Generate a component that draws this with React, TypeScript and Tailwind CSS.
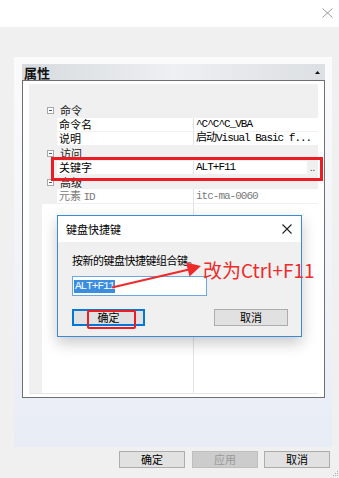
import React from 'react';

const ui = "font-['Noto_Sans_CJK_SC',sans-serif]";
const mono = "font-['Liberation_Mono','Noto_Sans_CJK_SC',monospace] tracking-[-1px]";

const Category: React.FC<{ label: string }> = ({ label }) => (
  <div className="h-[14.33px] flex items-center">
    <div className="ml-[18px] w-[7px] h-[7px] border border-[#a8a8a8] bg-white flex items-center justify-center">
      <div className="w-[3px] h-px bg-[#4b5b78]" />
    </div>
    <span className="ml-[6px] text-[11px] leading-none text-[#222]">{label}</span>
  </div>
);

interface PropRowProps {
  name: React.ReactNode;
  value: string;
  muted?: boolean;
  more?: boolean;
}

const PropRow: React.FC<PropRowProps> = ({ name, value, muted, more }) => (
  <div className="h-[14.33px] flex pl-[28px]">
    <div className={`flex-1 flex bg-white mb-px ${muted ? 'text-[#7a7a7a]' : 'text-black'}`}>
      <div className="w-[137px] border-r border-[#e3e3e3] pl-[2px] flex items-center text-[11px] leading-none">{name}</div>
      <div className={`flex-1 pl-[2px] flex items-center text-[11px] leading-none ${mono}`}>{value}</div>
      {more && (
        <div className="w-[11px] bg-[#f0f0f0] flex items-end justify-center pb-[2px] text-[9px] leading-none text-[#555]">..</div>
      )}
    </div>
  </div>
);

const Btn: React.FC<{ label: string; disabled?: boolean; className?: string }> = ({ label, disabled, className = '' }) => (
  <div
    className={`h-[17px] flex items-center justify-center text-[11px] leading-none border ${
      disabled ? 'bg-[#cccccc] border-[#bfbfbf] text-[#9a9a9a]' : 'bg-[#e1e1e1] border-[#adadad] text-black'
    } ${className}`}
  >
    {label}
  </div>
);

export default function App() {
  return (
    <div className={`relative w-[339px] h-[478px] bg-[#f0f0f0] overflow-hidden ${ui}`}>
      {/* top bar */}
      <div className="h-[27px] bg-white flex justify-end items-start pr-[6px] pt-[8px]">
        <svg width="11" height="10" viewBox="0 0 11 10">
          <path d="M0.5 0.5 L10.5 9.5 M10.5 0.5 L0.5 9.5" stroke="#9a9a9a" strokeWidth="1" fill="none" />
        </svg>
      </div>

      {/* outer panel */}
      <div className="mt-[30px] ml-[14px] mr-[7px] h-[390px] bg-gradient-to-b from-[#fbfbfc] to-[#e8ecf5] pt-[7px] pl-[8px] pr-[7px]">
        <div className="h-[16px] flex items-center justify-between pl-[2px] pr-[5px] bg-gradient-to-r from-[#d6dade] via-[#eef0f2] to-[#dcdfe3]">
          <span className="text-[13px] font-bold leading-none text-[#111]">属性</span>
          <svg width="5" height="3" viewBox="0 0 5 3">
            <path d="M2.5 0 L5 3 L0 3 Z" fill="#111" />
          </svg>
        </div>
        <div className="h-[318px] border border-[#6f6f6f] bg-white pt-[3px] px-[6px]">
          <div className="h-[310px] flex flex-col bg-[#f0f0f0] border-b border-[#e6e6e6]">
            <div className="h-[19.5px] shrink-0" />
            <Category label="命令" />
            <PropRow name="命令名" value="^C^C^C_VBA" />
            <PropRow name="说明" value="启动Visual Basic f..." />
            <Category label="访问" />
            <PropRow name="关键字" value="ALT+F11" more />
            <Category label="高级" />
            <PropRow
              muted
              name={
                <span>
                  元素 <span className={mono}>ID</span>
                </span>
              }
              value="itc-ma-0060"
            />
            <div className="flex-1 flex pl-[13px]">
              <div className="flex-1 flex bg-white">
                <div className="w-[152px] border-r border-[#e3e3e3]" />
              </div>
            </div>
          </div>
        </div>
      </div>

      {/* bottom buttons */}
      <div className="mt-[4px] flex justify-end pr-[9px]">
        <Btn label="确定" className="w-[66px]" />
        <Btn label="应用" disabled className="w-[66px] ml-[7px]" />
        <Btn label="取消" className="w-[66px] ml-[6px]" />
      </div>

      {/* resize grip */}
      <svg className="absolute right-0 bottom-0" width="7" height="8" viewBox="0 0 7 8">
        <rect x="5" y="1" width="1" height="1" fill="#b0b0b0" />
        <rect x="3" y="3" width="1" height="1" fill="#b0b0b0" />
        <rect x="5" y="3" width="1" height="1" fill="#b0b0b0" />
        <rect x="1" y="5" width="1" height="1" fill="#b0b0b0" />
        <rect x="3" y="5" width="1" height="1" fill="#b0b0b0" />
        <rect x="5" y="5" width="1" height="1" fill="#b0b0b0" />
      </svg>

      {/* red box around 关键字 row */}
      <div className="absolute left-[51px] top-[157px] w-[272px] h-[24px] border-[3px] border-[#ec1c24]" />

      {/* dialog */}
      <div className="absolute left-[57px] top-[215px] w-[245px] h-[122px] border border-[#3a8ad6] bg-[#f0f0f0] flex flex-col shadow-[0_6px_14px_rgba(0,0,0,0.22)]">
        <div className="h-[26px] bg-white flex items-center justify-between pl-[8px] pr-[9px]">
          <span className="text-[11px] leading-none text-black">键盘快捷键</span>
          <svg width="10" height="10" viewBox="0 0 10 10">
            <path d="M0.5 0.5 L9.5 9.5 M9.5 0.5 L0.5 9.5" stroke="#222" strokeWidth="1.1" fill="none" />
          </svg>
        </div>
        <div className="flex-1 pl-[14px] pt-[13px]">
          <div className="text-[11px] leading-none tracking-[-0.5px] text-black">按新的键盘快捷键组合键。</div>
          <div className="mt-[10px] w-[135px] h-[20px] border border-[#6aa7e3] bg-white flex items-center pl-[1px]">
            <span className={`bg-[#3b8de0] text-white text-[11px] leading-[13px] px-[1px] ${mono}`}>ALT+F11</span>
          </div>
          <div className="mt-[13px] flex">
            <div className="w-[73px] h-[17px] border-2 border-[#0078d7] bg-[#e1e1e1] flex items-center justify-center text-[11px] leading-none text-black">
              确定
            </div>
            <Btn label="取消" className="w-[74px] ml-[69px]" />
          </div>
        </div>
      </div>

      {/* red box around dialog OK */}
      <div className="absolute left-[87px] top-[310px] w-[49px] h-[19px] border-2 border-[#ec1c24] rounded-[2px]" />

      {/* arrow annotation */}
      <svg className="absolute left-0 top-0 pointer-events-none" width="339" height="478" viewBox="0 0 339 478">
        <path d="M112 287.5 L189 269.5" stroke="#ee2a2a" strokeWidth="2.2" fill="none" />
        <path d="M201 266 L186 262.5 L189.5 276.5 Z" fill="#ee2a2a" />
      </svg>
      <div className="absolute left-[203px] top-[258px] text-[19px] leading-[24px] text-[#ee2a2a] whitespace-nowrap">
        改为Ctrl+F11
      </div>
    </div>
  );
}
